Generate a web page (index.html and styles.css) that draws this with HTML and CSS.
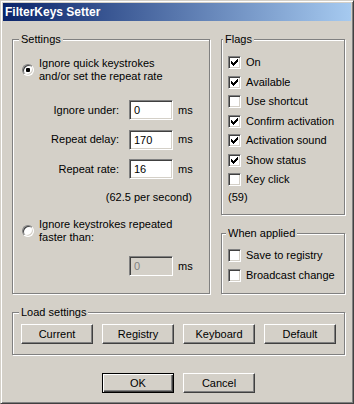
FILE: index.html
```html
<!DOCTYPE html>
<html lang="en">
<head>
  <meta charset="UTF-8" />
  <title>FilterKeys Setter</title>
  <link rel="stylesheet" href="styles.css">
</head>
<body>
  <div class="window">
    <div class="titlebar">FilterKeys Setter</div>
    <div class="client">
      <div class="top-grid">
        <fieldset class="group group-settings">
          <legend>Settings</legend>
          <div class="settings-body">
            <div class="radio-row">
              <span class="radio checked"></span>
              <span class="radio-text">Ignore quick keystrokes<br>and/or set the repeat rate</span>
            </div>
            <div class="field-rows">
              <div class="field-row"><span class="field-label">Ignore under:</span><input class="edit" type="text" value="0"><span class="unit">ms</span></div>
              <div class="field-row"><span class="field-label">Repeat delay:</span><input class="edit" type="text" value="170"><span class="unit">ms</span></div>
              <div class="field-row"><span class="field-label">Repeat rate:</span><input class="edit" type="text" value="16"><span class="unit">ms</span></div>
            </div>
            <div class="rate-note">(62.5 per second)</div>
            <div class="radio-row radio-row-second">
              <span class="radio"></span>
              <span class="radio-text">Ignore keystrokes repeated<br>faster than:</span>
            </div>
            <div class="field-row field-row-bounce"><input class="edit" type="text" value="0" disabled><span class="unit">ms</span></div>
          </div>
        </fieldset>

        <div class="right-col">
          <fieldset class="group group-flags">
            <legend>Flags</legend>
            <div class="flags-body">
              <div class="check-list">
                <div class="check-row"><span class="check"><svg width="7" height="7" viewBox="0 0 7 7"><path d="M6 0h1v1h-1zM5 1h2v1h-2zM0 2h1v1h-1zM4 2h3v1h-3zM0 3h2v1h-2zM3 3h3v1h-3zM0 4h5v1h-5zM1 5h3v1h-3zM2 6h1v1h-1z"/></svg></span>On</div>
                <div class="check-row"><span class="check"><svg width="7" height="7" viewBox="0 0 7 7"><path d="M6 0h1v1h-1zM5 1h2v1h-2zM0 2h1v1h-1zM4 2h3v1h-3zM0 3h2v1h-2zM3 3h3v1h-3zM0 4h5v1h-5zM1 5h3v1h-3zM2 6h1v1h-1z"/></svg></span>Available</div>
                <div class="check-row"><span class="check"></span>Use shortcut</div>
                <div class="check-row"><span class="check"><svg width="7" height="7" viewBox="0 0 7 7"><path d="M6 0h1v1h-1zM5 1h2v1h-2zM0 2h1v1h-1zM4 2h3v1h-3zM0 3h2v1h-2zM3 3h3v1h-3zM0 4h5v1h-5zM1 5h3v1h-3zM2 6h1v1h-1z"/></svg></span>Confirm activation</div>
                <div class="check-row"><span class="check"><svg width="7" height="7" viewBox="0 0 7 7"><path d="M6 0h1v1h-1zM5 1h2v1h-2zM0 2h1v1h-1zM4 2h3v1h-3zM0 3h2v1h-2zM3 3h3v1h-3zM0 4h5v1h-5zM1 5h3v1h-3zM2 6h1v1h-1z"/></svg></span>Activation sound</div>
                <div class="check-row"><span class="check"><svg width="7" height="7" viewBox="0 0 7 7"><path d="M6 0h1v1h-1zM5 1h2v1h-2zM0 2h1v1h-1zM4 2h3v1h-3zM0 3h2v1h-2zM3 3h3v1h-3zM0 4h5v1h-5zM1 5h3v1h-3zM2 6h1v1h-1z"/></svg></span>Show status</div>
                <div class="check-row"><span class="check"></span>Key click</div>
              </div>
              <div class="flags-value">(59)</div>
            </div>
          </fieldset>

          <fieldset class="group group-applied">
            <legend>When applied</legend>
            <div class="applied-body">
              <div class="check-row"><span class="check"></span>Save to registry</div>
              <div class="check-row"><span class="check"></span>Broadcast change</div>
            </div>
          </fieldset>
        </div>
      </div>

      <fieldset class="group group-load">
        <legend>Load settings</legend>
        <div class="load-body">
          <button class="btn">Current</button>
          <button class="btn">Registry</button>
          <button class="btn">Keyboard</button>
          <button class="btn">Default</button>
        </div>
      </fieldset>

      <div class="dialog-buttons">
        <button class="btn btn-default">OK</button>
        <button class="btn">Cancel</button>
      </div>
    </div>
  </div>
</body>
</html>
```

FILE: styles.css
```css
* { box-sizing: border-box; }
body {
  margin: 0;
  background: #d4d0c8; color: #000;
  font: 11px/13px "Liberation Sans", Arial, sans-serif;
}
.window {
  width: 354px; height: 404px;
  background: #d4d0c8;
  border: 1px solid; border-color: #d4d0c8 #404040 #404040 #d4d0c8;
  box-shadow: inset 1px 1px #fff, inset -1px -1px #808080;
  padding: 2px;
}
.titlebar {
  height: 18px; padding-left: 2px;
  background: linear-gradient(to right, #0a246a, #a6caf0);
  color: #fff; font-weight: bold; font-size: 12px; line-height: 18px;
  white-space: nowrap;
}
.client { padding: 12px 0 0 9px; }
.top-grid {
  display: grid;
  grid-template-columns: 198px 124px;
  column-gap: 11px;
}

/* group boxes: etched frame */
.group {
  margin: 0; padding: 0; min-width: 0;
  border: 1px solid #808080;
  box-shadow: inset 1px 1px #fff, 1px 1px #fff;
}
.group legend {
  margin-left: 6px; padding: 0 2px;
  background: #d4d0c8; line-height: 13px;
}
.group-flags legend { margin-left: 1px; }
.group-applied legend { margin-left: 4px; }

/* settings */
.settings-body { padding: 11px 0 0 9px; }
.radio-row { display: flex; align-items: center; }
.radio-row-second { margin-top: 14px; }
.radio {
  width: 12px; height: 12px; flex: none; margin-right: 5px;
  border-radius: 50%; background: #fff;
  border: 1px solid; border-color: #808080 #fff #fff #808080;
  box-shadow: inset 1px 1px #404040, inset -1px -1px #d4d0c8;
  display: flex; align-items: center; justify-content: center;
}
.radio.checked::after {
  content: ""; width: 4px; height: 4px;
  background: #000; border-radius: 1px;
}
.field-rows {
  display: flex; flex-direction: column; gap: 9.5px;
  margin-top: 17px;
}
.field-row { display: flex; align-items: center; height: 20px; }
.field-label { width: 97px; text-align: right; }
.edit {
  width: 44px; height: 20px; margin: 0 0 0 10px; padding: 0 4px;
  font: inherit; color: #000; background: #fff;
  border: 1px solid; border-color: #808080 #fff #fff #808080;
  box-shadow: inset 1px 1px #404040, inset -1px -1px #d4d0c8;
  outline: none;
}
.edit:disabled { background: #d4d0c8; color: #808080; }
.unit { margin-left: 5px; }
.rate-note { width: 170px; margin-top: 12px; text-align: right; }
.field-row-bounce { margin-top: 12px; padding-left: 97px; }

/* flags */
.right-col { display: flex; flex-direction: column; gap: 12px; }
.flags-body { padding: 10px 0 10px 6px; }
.check-list { display: flex; flex-direction: column; gap: 6.5px; }
.check-row { display: flex; align-items: center; height: 13px; white-space: nowrap; }
.check {
  width: 13px; height: 13px; flex: none; margin-right: 5px;
  background: #fff; padding: 2px;
  border: 1px solid; border-color: #808080 #fff #fff #808080;
  box-shadow: inset 1px 1px #404040, inset -1px -1px #d4d0c8;
}
.check svg { display: block; shape-rendering: crispEdges; }
.flags-value { margin-top: 5px; }
.applied-body {
  display: flex; flex-direction: column; gap: 7px;
  padding: 9px 0 11px 6px;
}

/* load settings + buttons */
.group-load { width: 333px; margin-top: 12px; }
.load-body { display: flex; gap: 9px; padding: 5px 0 10px 8px; }
.btn {
  width: 72px; height: 20px; margin: 0; padding: 0;
  font: inherit; color: #000; background: #d4d0c8;
  border: 1px solid; border-color: #fff #404040 #404040 #fff;
  box-shadow: inset -1px -1px #808080;
}
.btn-default {
  border-color: #000;
  box-shadow: inset 1px 1px #fff, inset -1px -1px #404040, inset -2px -2px #808080;
}
.dialog-buttons {
  width: 333px; margin-top: 18px;
  display: flex; justify-content: center; gap: 9px;
}
```
